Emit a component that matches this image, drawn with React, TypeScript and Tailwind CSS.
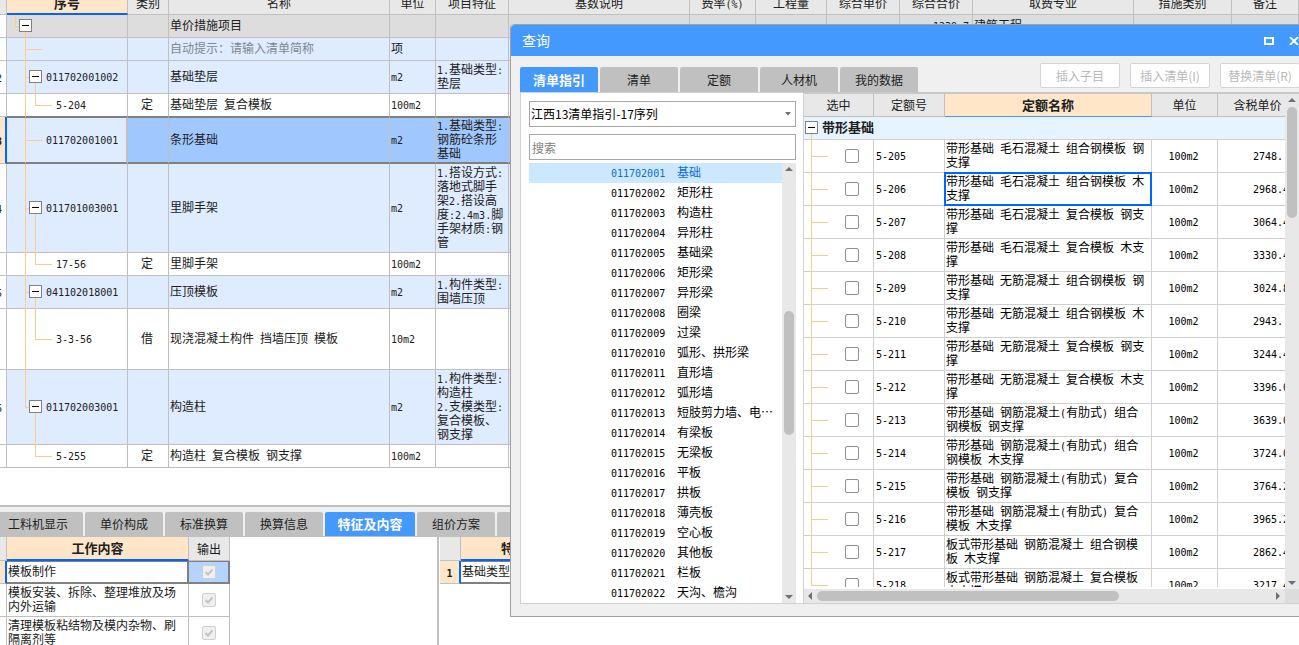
import React from "react";
import clsx from "clsx";

/* Latin runs are set in a half-width face so that one letter is half a Han glyph. */
function Mixed({ children }: { children: string }) {
  const lines = children.split("\n");
  return (
    <>
      {lines.map((line, i) => (
        <React.Fragment key={i}>
          {i > 0 && <br />}
          {line.split(/([\x20-\x7e]+)/).map((part, k) =>
            k % 2 === 1 ? (
              <span key={k} className="whitespace-pre font-['DejaVu_Sans_Mono',monospace] text-[10px] leading-none">
                {part}
              </span>
            ) : (
              part
            ),
          )}
        </React.Fragment>
      ))}
    </>
  );
}

function Expander({ className }: { className?: string }) {
  return (
    <button
      type="button"
      aria-label="折叠"
      className={clsx("absolute flex size-[13px] items-center justify-center border border-[#808080] bg-white", className)}
    >
      <span className="h-px w-[7px] bg-black" />
    </button>
  );
}

type Kind = "root" | "hint" | "item" | "bare" | "child";
type Row = {
  no?: string;
  kind: Kind;
  code: string;
  type?: string;
  name: string;
  unit: string;
  feature?: string;
  height: string;
  last?: boolean;
};

const rows: Row[] = [
  { kind: "root", code: "", name: "单价措施项目", unit: "", height: "h-[23px]" },
  { kind: "hint", code: "", name: "自动提示：请输入清单简称", unit: "项", height: "h-[23px]" },
  { no: "2", kind: "item", code: "011702001002", name: "基础垫层", unit: "m2", feature: "1.基础类型:\n垫层", height: "h-[33px]" },
  { kind: "child", code: "5-204", type: "定", name: "基础垫层 复合模板", unit: "100m2", height: "h-[23px]" },
  { no: "3", kind: "bare", code: "011702001001", name: "条形基础", unit: "m2", feature: "1.基础类型:\n钢筋砼条形\n基础", height: "h-[47px]" },
  { no: "4", kind: "item", code: "011701003001", name: "里脚手架", unit: "m2", feature: "1.搭设方式:\n落地式脚手\n架2.搭设高\n度:2.4m3.脚\n手架材质:钢\n管", height: "h-[89px]" },
  { kind: "child", code: "17-56", type: "定", name: "里脚手架", unit: "100m2", height: "h-[23px]" },
  { no: "5", kind: "item", code: "041102018001", name: "压顶模板", unit: "m2", feature: "1.构件类型:\n围墙压顶", height: "h-[33px]" },
  { kind: "child", code: "3-3-56", type: "借", name: "现浇混凝土构件 挡墙压顶 模板", unit: "10m2", height: "h-[61px]" },
  { no: "6", kind: "item", code: "011702003001", name: "构造柱", unit: "m2", feature: "1.构件类型:\n构造柱\n2.支模类型:\n复合模板、\n钢支撑", height: "h-[75px]", last: true },
  { kind: "child", code: "5-255", type: "定", name: "构造柱 复合模板 钢支撑", unit: "100m2", height: "h-[23px]", last: true },
];

const line = "absolute bg-[#ffcc88]";

function TreeMarks({ kind, last }: { kind: Kind; last?: boolean }) {
  if (kind === "root")
    return (
      <>
        <span className={clsx(line, "left-[8px] top-0 h-[11px] w-px")} />
        <span className={clsx(line, "left-[8px] top-[11px] h-px w-[4px]")} />
        <span className={clsx(line, "-bottom-px left-[18px] h-[6px] w-px")} />
        <Expander className="left-[12px] top-[4px]" />
      </>
    );
  return (
    <>
      {!(last && kind === "child") && (
        <span className={clsx(line, "left-[18px] top-0 w-px", last ? "bottom-1/2" : "-bottom-px")} />
      )}
      {(kind === "hint" || kind === "bare") && <span className={clsx(line, "left-[18px] top-1/2 h-px w-[17px]")} />}
      {kind === "item" && (
        <>
          <span className={clsx(line, "left-[18px] top-1/2 h-px w-[5px]")} />
          <span className={clsx(line, "-bottom-px left-[28px] top-1/2 w-px")} />
          <Expander className="left-[22px] top-1/2 -mt-[7px]" />
        </>
      )}
      {kind === "child" && (
        <>
          <span className={clsx(line, "left-[28px] top-0 h-1/2 w-px")} />
          <span className={clsx(line, "left-[28px] top-1/2 h-px w-[17px]")} />
        </>
      )}
    </>
  );
}

function BudgetTable() {
  const head = "border-b border-r border-[#c0c0c0] bg-[#e8e8e8] p-0 font-normal";
  const extra = ["基数说明", "费率(%)", "工程量", "综合单价", "综合合价", "取费专业", "措施类别", "备注"];
  return (
    <table className="-mt-2 w-full min-w-[1299px] table-fixed border-separate border-spacing-0">
      <colgroup>
        <col className="w-[7px]" />
        <col className="w-[121px]" />
        <col className="w-[41px]" />
        <col className="w-[221px]" />
        <col className="w-[46px]" />
        <col className="w-[73px]" />
        <col className="w-[181px]" />
        <col className="w-[66px]" />
        <col className="w-[71px]" />
        <col className="w-[73px]" />
        <col className="w-[73px]" />
        <col className="w-[161px]" />
        <col className="w-[98px]" />
        <col />
      </colgroup>
      <thead>
        <tr className="h-[23px]">
          <th className={head} />
          <th className="border-b-2 border-r border-b-[#0066ff] border-r-[#c0c0c0] bg-[#ffe6c8] p-0 text-[13px] font-bold">序号</th>
          {["类别", "名称", "单位", "项目特征", ...extra].map((h) => (
            <th key={h} className={head}>
              <Mixed>{h}</Mixed>
            </th>
          ))}
        </tr>
      </thead>
      <tbody>
        {rows.map((r, i) => {
          const selected = r.kind === "bare";
          const beforeSelected = rows[i + 1]?.kind === "bare";
          const cell = clsx(
            "border-r border-r-[#c0c0c0] pb-0.5 pl-px pr-0 pt-0",
            selected ? "border-b-2 border-t border-y-[#808080]" : "border-b",
            !selected && (beforeSelected ? "border-b-[#808080]" : "border-b-[#c0c0c0]"),
          );
          const tint = selected ? "bg-[#a0c8ff]" : r.kind === "root" ? "bg-[#dddddd]" : r.kind === "child" ? "bg-white" : "bg-[#dfebff]";
          return (
            <tr key={i} className={r.height}>
              <td
                className={clsx(
                  "overflow-hidden border-b border-b-[#c0c0c0] p-0",
                  selected ? "border-r-2 border-r-[#0066ff] bg-[#ffe6c8] font-bold" : "border-r border-r-[#c0c0c0]",
                )}
              >
                <span className="-ml-1 block">
                  <Mixed>{r.no ?? ""}</Mixed>
                </span>
              </td>
              <td className={clsx(cell, "relative", selected ? "border-r-2 border-r-[#808080] bg-[#dfebff]" : tint)}>
                <TreeMarks kind={r.kind} last={r.last} />
                <span className={clsx("block", r.kind === "child" ? "pl-[48px]" : "pl-[38px]")}>
                  <Mixed>{r.code}</Mixed>
                </span>
              </td>
              <td className={clsx(cell, tint, "pr-[3px] text-center")}>{r.type}</td>
              <td className={clsx(cell, tint, r.kind === "hint" && "text-[#808890]")}>
                <Mixed>{r.name}</Mixed>
              </td>
              <td className={clsx(cell, tint)}>
                <Mixed>{r.unit}</Mixed>
              </td>
              <td className={clsx(cell, tint, "whitespace-nowrap")}>
                <Mixed>{r.feature ?? ""}</Mixed>
              </td>
              {extra.map((h) => (
                <td key={h} className={clsx(cell, tint, h === "综合合价" && "pr-[3px] text-right")}>
                  <Mixed>{r.kind !== "root" ? "" : h === "综合合价" ? "1239.7" : h === "取费专业" ? "建筑工程" : ""}</Mixed>
                </td>
              ))}
            </tr>
          );
        })}
      </tbody>
    </table>
  );
}

function DisabledTick({ label }: { label: string }) {
  return (
    <span className="relative mx-auto block size-[14px]">
      <input
        type="checkbox"
        aria-label={label}
        defaultChecked
        disabled
        className="block size-[14px] appearance-none rounded-xs border border-[#d0d0d0] bg-[#f0f0f0]"
      />
      <svg viewBox="0 0 14 14" className="pointer-events-none absolute inset-0 size-[14px]">
        <path d="M3.5 7 L6 9.5 L10.5 4.5" fill="none" stroke="#c4c4c4" strokeWidth="2" />
      </svg>
    </span>
  );
}

function DetailPanel() {
  const tabs = ["工料机显示", "单价构成", "标准换算", "换算信息", "特征及内容", "组价方案", "工程量明细"];
  const border = "border-b border-r border-[#c0c0c0]";
  return (
    <section className="flex h-[140px] shrink-0 flex-col border-t-2 border-[#c0c0c0] bg-white">
      <div role="tablist" className="flex h-[30px] shrink-0 items-end gap-0.5 overflow-hidden border-b border-[#c0c0c0] bg-[#f0f0f0]">
        {tabs.map((t, i) => (
          <button
            key={t}
            type="button"
            role="tab"
            aria-selected={i === 4}
            className={clsx(
              "h-[24px] shrink-0 rounded-t-xs",
              t.length > 4 ? "w-[90px]" : "w-[78px]",
              i === 0 && "-ml-[7px]",
              i === 4 ? "bg-[#4499ff] text-[13px] font-bold text-white" : "bg-[#c0c0c0]",
            )}
          >
            {t}
          </button>
        ))}
      </div>
      <div className="flex min-h-0 flex-1 overflow-hidden">
        <div className="w-[437px] shrink-0">
          <table className="w-[230px] table-fixed border-separate border-spacing-0">
            <colgroup>
              <col className="w-[7px]" />
              <col className="w-[182px]" />
              <col className="w-[41px]" />
            </colgroup>
            <thead>
              <tr className="h-6">
                <th className={clsx(border, "bg-[#e8e8e8] p-0")} />
                <th className="border-b-2 border-r border-b-[#0066ff] border-r-[#c0c0c0] bg-[#ffe6c8] p-0 text-[13px] font-bold">
                  工作内容
                </th>
                <th className={clsx(border, "bg-[#e8e8e8] p-0 font-normal")}>输出</th>
              </tr>
            </thead>
            <tbody>
              <tr className="h-[23px]">
                <td className="border-b border-r-2 border-b-[#c0c0c0] border-r-[#0066ff] bg-[#ffe6c8] p-0" />
                <td className="border-b-2 border-r-2 border-t border-[#808080] p-0 pb-0.5 pl-px">模板制作</td>
                <td className="border-b-2 border-r-2 border-t border-[#808080] bg-[#b4d4ff] p-0">
                  <DisabledTick label="输出 模板制作" />
                </td>
              </tr>
              {["模板安装、拆除、整理堆放及场\n内外运输", "清理模板粘结物及模内杂物、刷\n隔离剂等"].map((t) => (
                <tr key={t} className="h-[33px]">
                  <td className={clsx(border, "p-0")} />
                  <td className={clsx(border, "whitespace-pre-line p-0 pb-0.5 pl-px")}>{t}</td>
                  <td className={clsx(border, "p-0")}>
                    <DisabledTick label={"输出 " + t} />
                  </td>
                </tr>
              ))}
            </tbody>
          </table>
        </div>
        <div className="flex-1 border-l-2 border-[#c0c0c0]">
          <table className="ml-px w-[128px] table-fixed border-separate border-spacing-0">
            <colgroup>
              <col className="w-[21px]" />
              <col />
            </colgroup>
            <thead>
              <tr className="h-6">
                <th className={clsx(border, "bg-[#e8e8e8] p-0")} />
                <th className="border-b-2 border-r border-b-[#0066ff] border-r-[#c0c0c0] bg-[#ffe6c8] p-0 text-[13px] font-bold">
                  特征
                </th>
              </tr>
            </thead>
            <tbody>
              <tr className="h-[23px]">
                <td className="border-b border-r-2 border-b-[#c0c0c0] border-r-[#0066ff] bg-[#ffe6c8] p-0 text-center font-bold">
                  <Mixed>1</Mixed>
                </td>
                <td className="border-b-2 border-r-2 border-t border-[#808080] p-0 pb-0.5 pl-px">基础类型</td>
              </tr>
            </tbody>
          </table>
        </div>
      </div>
    </section>
  );
}

const guide = [
  "基础", "矩形柱", "构造柱", "异形柱", "基础梁", "矩形梁", "异形梁", "圈梁", "过梁", "弧形、拱形梁", "直形墙",
  "弧形墙", "短肢剪力墙、电⋯", "有梁板", "无梁板", "平板", "拱板", "薄壳板", "空心板", "其他板", "栏板", "天沟、檐沟",
];

const quotas: [string, string, string][] = [
  ["5-205", "带形基础 毛石混凝土 组合钢模板 钢\n支撑", "2748."],
  ["5-206", "带形基础 毛石混凝土 组合钢模板 木\n支撑", "2968.4"],
  ["5-207", "带形基础 毛石混凝土 复合模板 钢支\n撑", "3064.4"],
  ["5-208", "带形基础 毛石混凝土 复合模板 木支\n撑", "3330.4"],
  ["5-209", "带形基础 无筋混凝土 组合钢模板 钢\n支撑", "3024.8"],
  ["5-210", "带形基础 无筋混凝土 组合钢模板 木\n支撑", "2943."],
  ["5-211", "带形基础 无筋混凝土 复合模板 钢支\n撑", "3244.4"],
  ["5-212", "带形基础 无筋混凝土 复合模板 木支\n撑", "3396.0"],
  ["5-213", "带形基础 钢筋混凝土(有肋式) 组合\n钢模板 钢支撑", "3639.0"],
  ["5-214", "带形基础 钢筋混凝土(有肋式) 组合\n钢模板 木支撑", "3724.0"],
  ["5-215", "带形基础 钢筋混凝土(有肋式) 复合\n模板 钢支撑", "3764.2"],
  ["5-216", "带形基础 钢筋混凝土(有肋式) 复合\n模板 木支撑", "3965.2"],
  ["5-217", "板式带形基础 钢筋混凝土 组合钢模\n板 木支撑", "2862.4"],
  ["5-218", "板式带形基础 钢筋混凝土 复合模板\n木支撑", "3217.4"],
];

function Arrow({ dir, className }: { dir: "up" | "down" | "left" | "right"; className?: string }) {
  const d = {
    up: "M0 6 L4 2 L8 6 Z",
    down: "M0 2 L8 2 L4 6 Z",
    left: "M6 0 L2 4 L6 8 Z",
    right: "M2 0 L6 4 L2 8 Z",
  }[dir];
  return (
    <svg viewBox="0 0 8 8" className={clsx("size-2 shrink-0", className)} aria-hidden="true">
      <path d={d} fill="#6e6e78" />
    </svg>
  );
}

function GuideList() {
  return (
    <div className="flex w-[283px] shrink-0 flex-col border-y border-l border-[#d0d0d0] bg-white pl-2 pr-[7px] pt-2">
      <div className="relative">
        <select
          aria-label="清单指引"
          className="block h-[26px] w-full appearance-none border border-[#a8a8a8] bg-white pl-px text-[12px] text-black"
        >
          <option>江西13清单指引-17序列</option>
        </select>
        <svg viewBox="0 0 6 4" className="pointer-events-none absolute right-[5px] top-[11px] h-1 w-1.5">
          <path d="M0 0 L6 0 L3 3.5 Z" fill="#6e6e6e" />
        </svg>
      </div>
      <input
        type="text"
        aria-label="搜索"
        placeholder="搜索"
        className="mt-[7px] block h-[26px] w-full border border-[#a8a8a8] bg-white pl-0.5 text-[12px] placeholder:text-[#808080]"
      />
      <div className="mt-[3px] flex min-h-0 flex-1 overflow-hidden">
        <ul className="min-w-0 flex-1 text-black">
          {guide.map((name, i) => (
            <li key={name} className={clsx("flex h-5 items-center pb-[3px] pl-[82px]", i === 0 && "bg-[#cce8ff] text-[#0a6ce0]")}>
              <span className="w-[66px] shrink-0">
                <Mixed>{"011702" + String(i + 1).padStart(3, "0")}</Mixed>
              </span>
              <span className="whitespace-nowrap">{name}</span>
            </li>
          ))}
        </ul>
        <div className="flex w-[14px] shrink-0 flex-col items-center bg-[#e8e8e8]">
          <Arrow dir="up" className="mt-0.5" />
          <span className="mt-[138px] h-[124px] w-[10px] rounded-full bg-[#c0c0c0]" />
          <Arrow dir="down" className="mb-0.5 mt-auto" />
        </div>
      </div>
    </div>
  );
}

function QuotaGrid() {
  const head = "border-b border-r border-[#c0c0c0] bg-[#e8e8e8] p-0 font-normal";
  const cell = "border-b border-r border-[#d0d0d0] pt-0";
  return (
    <div className="flex min-w-0 flex-1 flex-col border-b border-l border-t-2 border-b-[#d0d0d0] border-l-[#d0d0d0] border-t-[#c8c8c8] bg-white">
      <div className="flex min-h-0 flex-1">
        <div className="mb-0.5 min-w-0 flex-1 overflow-hidden">
          <table className="w-full min-w-[492px] table-fixed border-separate border-spacing-0 text-black">
            <colgroup>
              <col className="w-[70px]" />
              <col className="w-[71px]" />
              <col className="w-[207px]" />
              <col className="w-[66px]" />
              <col />
            </colgroup>
            <thead className="text-[#202020]">
              <tr className="h-[23px]">
                <th className={head}>选中</th>
                <th className={head}>定额号</th>
                <th className="border-b border-r border-b-[#4499ff] border-r-[#c0c0c0] bg-[#ffe6c8] p-0 text-[13px] font-bold">
                  定额名称
                </th>
                <th className={head}>单位</th>
                <th className={clsx(head, "pl-0.5")}>含税单价</th>
              </tr>
            </thead>
            <tbody>
              <tr className="h-[23px]">
                <td colSpan={5} className="relative border-b border-[#d0d0d0] bg-[#e6f4ff] p-0 pb-0.5 pl-[18px] text-[13px] font-bold text-[#202020]">
                  <Expander className="left-px top-[4px]" />
                  <span className={clsx(line, "-bottom-px left-[7px] h-[6px] w-px")} />
                  带形基础
                </td>
              </tr>
              {quotas.map(([code, name, price], i) => (
                <tr key={code} className="h-[33px]">
                  <td className={clsx(cell, "relative px-0 pb-0")}>
                    <span className={clsx(line, "left-[7px] top-0 w-px", i === quotas.length - 1 ? "bottom-1/2" : "-bottom-px")} />
                    <span className={clsx(line, "left-[7px] top-1/2 h-px w-[17px]")} />
                    <input
                      type="checkbox"
                      aria-label={"选中 " + code}
                      className="ml-[41px] block size-[14px] appearance-none rounded-xs border border-[#909090] bg-white"
                    />
                  </td>
                  <td className={clsx(cell, "px-0.5 pb-[3px]")}>
                    <Mixed>{code}</Mixed>
                  </td>
                  <td className={clsx(cell, "relative whitespace-nowrap px-px pb-[3px]")}>
                    <Mixed>{name}</Mixed>
                    {i === 1 && <span className="absolute -inset-px border-2 border-[#0066ff]" />}
                  </td>
                  <td className={clsx(cell, "pb-[3px] pl-0 pr-0.5 text-center")}>
                    <Mixed>100m2</Mixed>
                  </td>
                  <td className={clsx(cell, "pb-[3px] pl-[35px] pr-0")}>
                    <Mixed>{price}</Mixed>
                  </td>
                </tr>
              ))}
            </tbody>
          </table>
        </div>
        <div className="flex w-[14px] shrink-0 flex-col items-center bg-[#e8e8e8]">
          <Arrow dir="up" className="mt-0.5" />
          <span className="mt-[3px] h-[111px] w-[10px] rounded-full bg-[#c0c0c0]" />
          <Arrow dir="down" className="mb-0.5 mt-auto" />
        </div>
      </div>
      <div className="flex h-[14px] shrink-0 items-center bg-[#e8e8e8]">
        <Arrow dir="left" className="ml-0.5" />
        <span className="ml-[3px] h-[10px] w-[302px] rounded-full bg-[#c0c0c0]" />
        <Arrow dir="right" className="ml-auto mr-[3px]" />
        <span className="h-full w-[14px] bg-[#dcdcdc]" />
      </div>
    </div>
  );
}

function QueryDialog() {
  return (
    <div
      role="dialog"
      aria-label="查询"
      className="absolute -right-3 left-[510px] top-6 rounded-t-sm border border-[#a0a0a0] bg-[#f0f0f0]"
    >
      <header className="flex h-[31px] items-center rounded-t-sm bg-[#4499ff] pl-[11px] pr-[11px] text-white">
        <h1 className="pb-0.5 text-[14px] leading-5">查询</h1>
        <button type="button" aria-label="最大化" className="ml-auto h-[8px] w-[10px] border-2 border-white" />
        <button type="button" aria-label="关闭" className="ml-[15px]">
          <svg viewBox="0 0 10 8" className="h-2 w-[10px]">
            <path d="M1 0 L9 8 M9 0 L1 8" stroke="#fff" strokeWidth="2" />
          </svg>
        </button>
      </header>
      <div className="pb-3 pl-[9px] pr-[11px]">
        <div className="flex h-9 items-end">
          <div role="tablist" className="flex gap-0.5">
            {["清单指引", "清单", "定额", "人材机", "我的数据"].map((t, i) => (
              <button
                key={t}
                type="button"
                role="tab"
                aria-selected={i === 0}
                className={clsx(
                  "h-[25px] w-[78px] rounded-t-xs",
                  i === 0 ? "bg-[#4499ff] text-[13px] font-bold text-white" : "bg-[#c0c0c0]",
                )}
              >
                {t}
              </button>
            ))}
          </div>
          <div className="-mr-px mb-1 ml-auto flex gap-[10px]">
            {["插入子目", "插入清单(I)", "替换清单(R)"].map((t) => (
              <button
                key={t}
                type="button"
                disabled
                className="h-[25px] w-[80px] rounded-xs border border-[#d4d4d4] bg-white text-[#b8b8b8]"
              >
                {t}
              </button>
            ))}
          </div>
        </div>
        <div className="flex h-[512px]">
          <GuideList />
          <QuotaGrid />
        </div>
      </div>
    </div>
  );
}

export default function App() {
  return (
    <main className="relative flex h-screen flex-col overflow-hidden bg-white font-['Noto_Sans_CJK_SC',sans-serif] text-[12px] leading-[14px] text-[#202020]">
      <section className="min-h-0 flex-1 overflow-hidden">
        <BudgetTable />
      </section>
      <DetailPanel />
      <QueryDialog />
    </main>
  );
}
